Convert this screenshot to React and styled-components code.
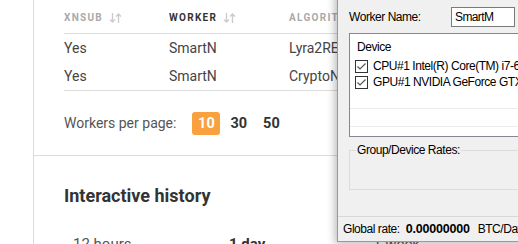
import React from 'react';
import styled, { createGlobalStyle } from 'styled-components';

const Global = createGlobalStyle`
  html, body { margin: 0; padding: 0; background: #fff; }
  body { width: 518px; height: 244px; overflow: hidden; font-family: Roboto, "Liberation Sans", sans-serif; }
`;

const Page = styled.div`
  position: relative;
  width: 518px;
  height: 244px;
  overflow: hidden;
`;

const Card = styled.div`
  margin-left: 33px;
  border-left: 1px solid #dcdcdc;
  height: 100%;
`;

const Section = styled.div`
  padding-left: 30px;
  border-bottom: ${p => (p.divider ? '1px solid #dcdcdc' : 'none')};
`;

const Table = styled.div`
  width: 460px;
  border-bottom: 1px solid #dcdcdc;
`;

const Row = styled.div`
  display: grid;
  grid-template-columns: 105px 120px 1fr;
  align-items: center;
  height: ${p => (p.head ? '34px' : '28px')};
  border-bottom: ${p => (p.head ? '1px solid #dcdcdc' : 'none')};
  box-sizing: border-box;
  padding-top: ${p => (p.head ? '2px' : '0')};
`;

const Th = styled.div`
  font-size: 10px;
  font-weight: 700;
  letter-spacing: 1.3px;
  text-transform: uppercase;
  color: ${p => (p.active ? '#333' : '#aaa')};
  display: flex;
  align-items: center;
  gap: 6px;
  white-space: nowrap;
`;

const Td = styled.div`
  font-size: 14px;
  color: #444;
  white-space: nowrap;
`;

const Pager = styled.div`
  display: flex;
  align-items: center;
  height: 64px;
  color: #555;
`;

const PagerLabel = styled.span`
  font-size: 14px;
  margin-right: 16px;
`;

const PageBtn = styled.span`
  display: inline-flex;
  align-items: center;
  justify-content: center;
  height: 23px;
  margin-right: ${p => (p.active ? '10px' : '16px')};
  border-radius: 3px;
  font-weight: 700;
  font-size: 14.5px;
  background: ${p => (p.active ? '#f9a03f' : 'transparent')};
  color: ${p => (p.active ? '#fff' : '#333')};
  min-width: ${p => (p.active ? '28px' : '0')};
`;

const Heading = styled.h2`
  margin: 0;
  padding-top: 26px;
  font-size: 18px;
  font-weight: 700;
  color: #333;
  line-height: 28px;
`;

const Tabs = styled.div`
  display: flex;
  padding-top: 25px;
  padding-left: 9px;
  font-size: 15px;
  color: #555;
`;

const Tab = styled.span`
  width: ${p => p.w}px;
  flex-shrink: 0;
  font-weight: ${p => (p.bold ? 700 : 400)};
  color: ${p => (p.bold ? '#333' : '#555')};
`;

const SortIcon = () => (
  <svg width="13" height="12" viewBox="0 0 13 12">
    <path d="M3.5 1v9M1 7.5l2.5 2.5 2.5-2.5" stroke="#ccc" strokeWidth="1.4" fill="none" />
    <path d="M9.5 11V2M7 4.5l2.5-2.5 2.5 2.5" stroke="#ccc" strokeWidth="1.4" fill="none" />
  </svg>
);

/* ---- native window on top ---- */

const Win = styled.div`
  position: absolute;
  left: 337px;
  top: -30px;
  width: 200px;
  height: 272px;
  background: #f0f0f0;
  border-left: 1px solid #9a9a9a;
  border-bottom: 1px solid #9a9a9a;
  box-shadow: -2px 2px 8px rgba(0, 0, 0, 0.28);
  font-family: "Liberation Sans", Arial, sans-serif;
  font-size: 12px;
  letter-spacing: -0.45px;
  color: #000;
  display: flex;
  flex-direction: column;
  box-sizing: border-box;
`;

const WinBody = styled.div`
  padding: 10px 0 0 11px;
  flex: 1;
  display: flex;
  flex-direction: column;
`;

const Field = styled.div`
  display: flex;
  align-items: center;
  height: 20px;
  margin-bottom: ${p => p.mb || 0}px;
`;

const FieldLabel = styled.span`
  width: 102px;
  flex-shrink: 0;
`;

const TextBox = styled.div`
  width: 59px;
  height: 18px;
  flex-shrink: 0;
  border: 1px solid #7a7a7a;
  background: #fff;
  padding-left: 3px;
  line-height: 18px;
  letter-spacing: -0.6px;
`;

const ListBox = styled.div`
  height: 102px;
  border: 1px solid #828790;
  border-right: none;
  background: #fff;
  padding-left: 5px;
`;

const ListHead = styled.div`
  height: 24px;
  line-height: 26px;
  padding-left: 2px;
`;

const ListRow = styled.div`
  display: flex;
  align-items: center;
  gap: 5px;
  height: 16px;
  white-space: nowrap;
  svg { flex-shrink: 0; }
`;

const GridLine = styled.div`
  height: ${p => p.h}px;
  border-bottom: 1px solid #ececec;
  margin-left: -5px;
`;

const Group = styled.fieldset`
  margin: 6px 0 0;
  height: 45px;
  padding: 0;
  border: 1px solid #dcdcdc;
  border-right: none;
  box-sizing: content-box;
  legend {
    margin-left: 6px;
    padding: 0 1px;
    font-size: 12px;
    line-height: 14px;
  }
`;

const Status = styled.div`
  height: 24px;
  border-top: 1px solid #d7d7d7;
  display: flex;
  align-items: center;
  padding-left: 5px;
  white-space: nowrap;
`;

const Rate = styled.b`
  margin: 0 8px 0 6px;
  font-size: 12.5px;
  letter-spacing: -0.2px;
`;

const Check = () => (
  <svg width="13" height="13" viewBox="0 0 13 13">
    <rect x="0.5" y="0.5" width="12" height="12" fill="#fff" stroke="#333" />
    <path d="M2.5 6.5l2.5 2.5 5.5-5.5" stroke="#555" strokeWidth="1.2" fill="none" />
  </svg>
);

export default function App() {
  return (
    <Page>
      <Global />
      <Card>
        <Section divider>
          <Table>
            <Row head>
              <Th>Xnsub <SortIcon /></Th>
              <Th active>Worker <SortIcon /></Th>
              <Th>Algorithm</Th>
            </Row>
            <Row>
              <Td>Yes</Td>
              <Td>SmartN</Td>
              <Td>Lyra2REv2</Td>
            </Row>
            <Row>
              <Td>Yes</Td>
              <Td>SmartN</Td>
              <Td>CryptoNight</Td>
            </Row>
          </Table>
          <Pager>
            <PagerLabel>Workers per page:</PagerLabel>
            <PageBtn active>10</PageBtn>
            <PageBtn>30</PageBtn>
            <PageBtn>50</PageBtn>
          </Pager>
        </Section>
        <Section>
          <Heading>Interactive history</Heading>
          <Tabs>
            <Tab w={156}>12 hours</Tab>
            <Tab w={144} bold>1 day</Tab>
            <Tab w={80}>1 week</Tab>
          </Tabs>
        </Section>
      </Card>

      <Win>
        <WinBody>
          <Field mb={7}>
            <FieldLabel>Worker Group:</FieldLabel>
            <TextBox>Default</TextBox>
          </Field>
          <Field mb={6}>
            <FieldLabel>Worker Name:</FieldLabel>
            <TextBox>SmartM</TextBox>
          </Field>
          <ListBox>
            <ListHead>Device</ListHead>
            <ListRow><Check />CPU#1 Intel(R) Core(TM) i7-6800K CPU</ListRow>
            <ListRow><Check />GPU#1 NVIDIA GeForce GTX 1080</ListRow>
            <GridLine h={18} />
            <GridLine h={17} />
          </ListBox>
          <Group>
            <legend>Group/Device Rates:</legend>
          </Group>
        </WinBody>
        <Status>
          Global rate:<Rate>0.00000000</Rate>BTC/Day
        </Status>
      </Win>
    </Page>
  );
}
